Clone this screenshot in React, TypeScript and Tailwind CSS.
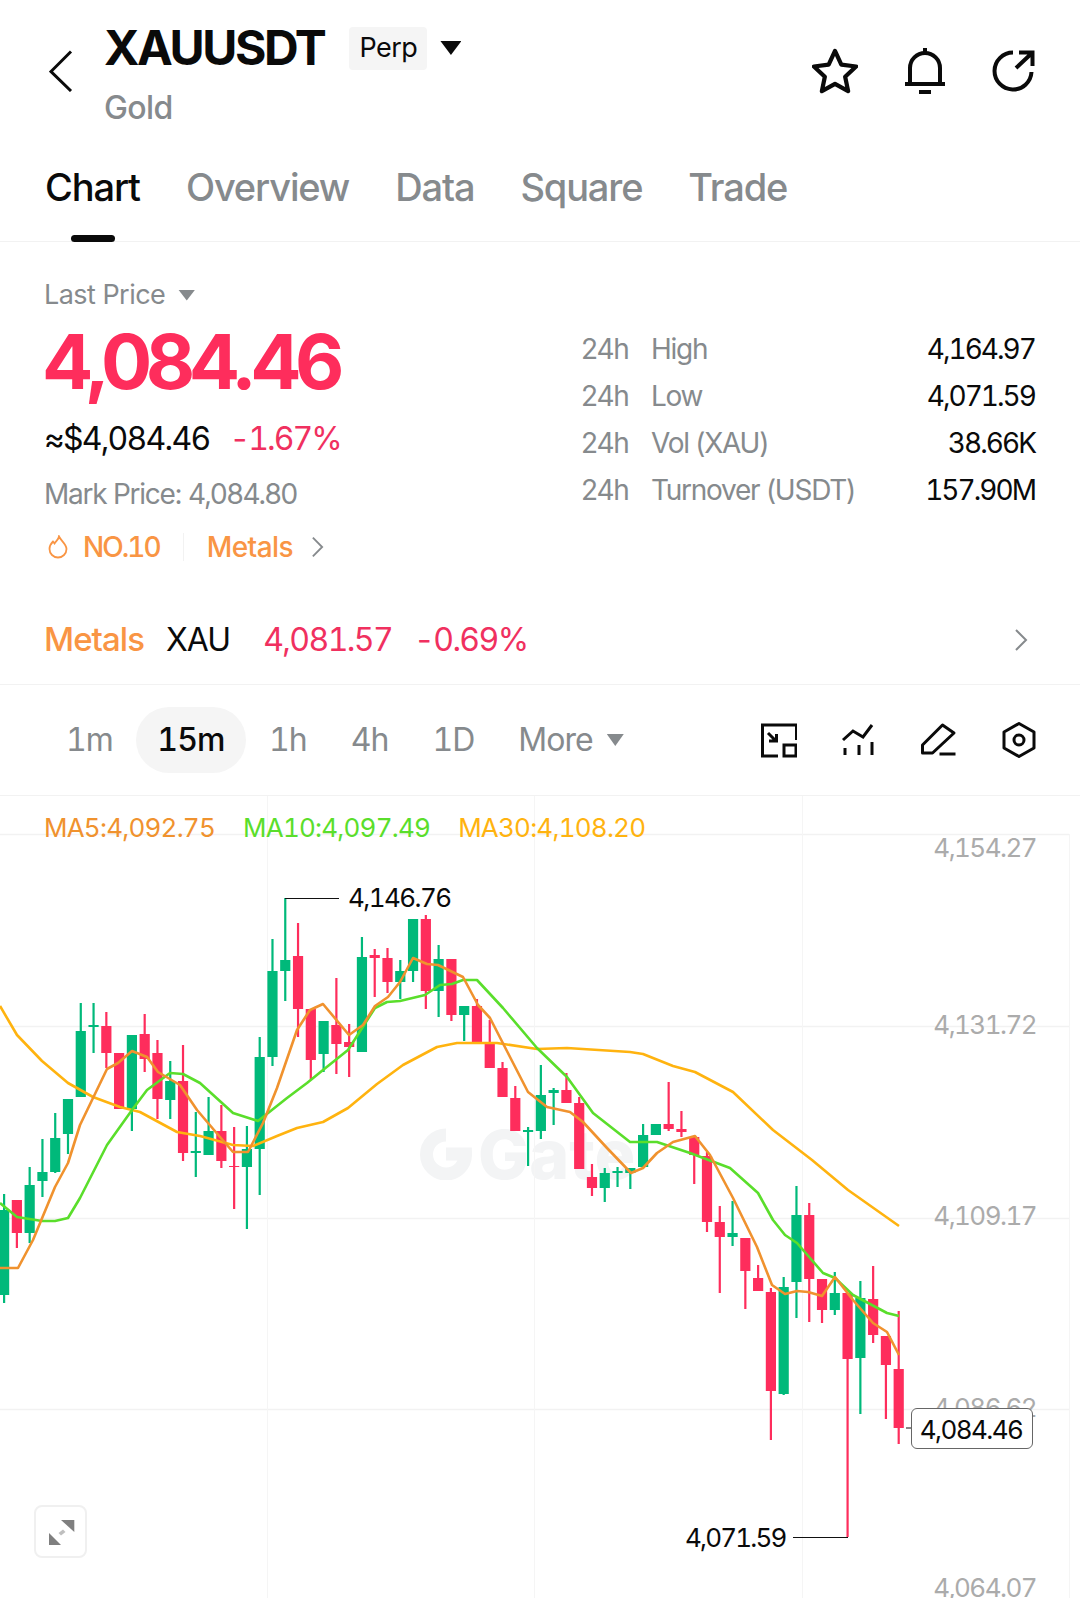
type Candle = [string, number, number, number, number];

// chart data in page pixels: colour, wick top, body top, body bottom, wick bottom
const candles: Candle[] = [
  ['g', 1194, 1210, 1295, 1303], ['r', 1200, 1200, 1233, 1248], ['g', 1167, 1185, 1233, 1243], ['g', 1139, 1172, 1181, 1197],
  ['g', 1113, 1138, 1172, 1173], ['g', 1099, 1099, 1134, 1154], ['g', 1003, 1031, 1097, 1097], ['g', 1003, 1025, 1027, 1053],
  ['r', 1012, 1026, 1053, 1068], ['r', 1053, 1053, 1109, 1109], ['g', 1035, 1035, 1109, 1131], ['r', 1014, 1034, 1059, 1072],
  ['r', 1040, 1053, 1099, 1119], ['g', 1061, 1081, 1100, 1119], ['r', 1045, 1081, 1153, 1161], ['g', 1112, 1151, 1153, 1177],
  ['g', 1097, 1131, 1155, 1155], ['r', 1105, 1131, 1161, 1168], ['r', 1127, 1166, 1167, 1209], ['g', 1126, 1149, 1167, 1229],
  ['g', 1037, 1057, 1149, 1195], ['g', 939, 971, 1057, 1066], ['g', 898, 960, 971, 1001], ['r', 923, 956, 1009, 1037],
  ['r', 1009, 1009, 1060, 1079], ['g', 1021, 1021, 1054, 1072], ['r', 978, 1025, 1044, 1074], ['r', 1024, 1042, 1047, 1077],
  ['g', 937, 957, 1052, 1052], ['r', 949, 955, 958, 997], ['r', 948, 958, 982, 993], ['g', 960, 971, 982, 999],
  ['g', 919, 919, 971, 982], ['r', 915, 919, 991, 1009], ['g', 945, 959, 991, 1017], ['r', 959, 959, 1015, 1021],
  ['g', 1006, 1006, 1015, 1041], ['r', 999, 1006, 1042, 1042], ['r', 1020, 1042, 1068, 1068], ['r', 1062, 1068, 1097, 1097],
  ['r', 1086, 1098, 1131, 1131], ['g', 1127, 1130, 1132, 1166], ['g', 1065, 1095, 1131, 1139], ['g', 1088, 1090, 1093, 1125],
  ['r', 1073, 1090, 1103, 1103], ['r', 1097, 1103, 1169, 1169], ['r', 1164, 1177, 1188, 1196], ['g', 1168, 1173, 1188, 1202],
  ['g', 1167, 1171, 1173, 1187], ['g', 1168, 1168, 1173, 1189], ['g', 1124, 1135, 1167, 1167], ['g', 1124, 1124, 1135, 1135],
  ['r', 1082, 1124, 1129, 1131], ['r', 1111, 1129, 1132, 1137], ['r', 1137, 1137, 1155, 1184], ['r', 1152, 1156, 1222, 1232],
  ['r', 1206, 1222, 1237, 1293], ['g', 1201, 1233, 1237, 1246], ['r', 1238, 1238, 1271, 1309], ['r', 1265, 1278, 1291, 1291],
  ['r', 1288, 1292, 1391, 1440], ['g', 1277, 1287, 1394, 1395], ['g', 1186, 1215, 1282, 1318], ['r', 1203, 1215, 1279, 1322],
  ['r', 1279, 1279, 1310, 1323], ['g', 1272, 1293, 1310, 1315], ['r', 1293, 1293, 1359, 1537], ['g', 1281, 1298, 1358, 1414],
  ['r', 1266, 1299, 1335, 1343], ['r', 1336, 1336, 1365, 1419], ['r', 1311, 1369, 1428, 1444],
];

const ma30 = '0,1006 17,1035 42,1061 68,1083 93,1097 120,1107 140,1112 177,1132 200,1136 233,1145 253,1146 277,1136 297,1128 323,1122 348,1108 377,1084 403,1065 437,1047 457,1043 497,1043 537,1049 567,1048 630,1052 643,1054 673,1066 695,1072 733,1092 773,1130 812,1160 848,1190 899,1226';
const ma10 = '0,1203 17,1217 42,1221 55,1221 68,1218 80,1198 107,1145 132,1110 147,1090 170,1073 183,1074 200,1083 233,1113 258,1121 287,1098 307,1083 323,1070 348,1050 375,1008 387,1002 400,1001 425,995 440,985 452,984 463,980 477,980 503,1008 537,1048 567,1077 593,1113 630,1142 657,1142 690,1153 730,1168 758,1193 773,1220 785,1235 797,1243 823,1273 835,1278 853,1295 887,1313 899,1316';
const ma5 = '0,1268 18,1268 33,1240 55,1187 68,1163 80,1125 107,1069 118,1063 132,1051 147,1057 158,1072 180,1085 197,1110 220,1137 233,1152 248,1152 263,1123 277,1088 297,1030 310,1010 323,1004 349,1035 363,1025 375,1006 388,997 400,982 413,958 427,964 438,965 463,977 478,1005 490,1018 510,1057 528,1092 547,1107 570,1112 583,1122 607,1148 631,1173 643,1168 657,1153 673,1142 695,1136 710,1155 733,1198 757,1247 772,1285 785,1294 797,1291 808,1292 822,1296 835,1277 853,1300 873,1323 887,1332 899,1355';

const stats = [
  ['High', '4,164.97'],
  ['Low', '4,071.59'],
  ['Vol (XAU)', '38.66K'],
  ['Turnover (USDT)', '157.90M'],
];

function ChartDrawing() {
  return (
    <svg viewBox="0 796 1080 802" className="absolute inset-0 w-[1080px] h-[802px]">
      {[834, 1026, 1218, 1409].map((y) => (
        <line key={y} x1="0" y1={y + 0.5} x2="1069" y2={y + 0.5} stroke="#f2f2f2" strokeWidth="1.5" />
      ))}
      {[267, 534, 802].map((x) => (
        <line key={x} x1={x + 0.5} y1="796" x2={x + 0.5} y2="1598" stroke="#f5f5f5" />
      ))}
      <line x1="1069.5" y1="834" x2="1069.5" y2="1598" stroke="#f5f5f5" />
      {candles.map(([color, wickTop, bodyTop, bodyBottom, wickBottom], i) => {
        const x = 4 + i * 12.78;
        const fill = color === 'g' ? '#00b97a' : '#fe2d5c';
        return (
          <g key={i} fill={fill}>
            <rect x={x - 1} y={wickTop} width="2.2" height={wickBottom - wickTop} />
            <rect x={x - 5} y={bodyTop} width="10.2" height={bodyBottom - bodyTop} />
          </g>
        );
      })}
      <polyline points={ma30} fill="none" stroke="#ffb30f" strokeWidth="2.6" strokeLinejoin="round" />
      <polyline points={ma10} fill="none" stroke="#5ade2b" strokeWidth="2.6" strokeLinejoin="round" />
      <polyline points={ma5} fill="none" stroke="#f0922e" strokeWidth="2.6" strokeLinejoin="round" />
      <path d="M285 898.5H339M793 1537.5H848M906 1428H912" stroke="#111" strokeWidth="1" fill="none" />
    </svg>
  );
}

function IconButton({ children }: { children: React.ReactNode }) {
  return (
    <svg viewBox="0 0 36 36" className="w-9 h-9" fill="none" stroke="#0a0a0a" strokeWidth="3">
      {children}
    </svg>
  );
}

const Triangle = ({ className }: { className: string }) => <div className={`[clip-path:polygon(0_0,100%_0,50%_100%)] ${className}`} />;

export default function App() {
  return (
    <main className="w-[1080px] h-[1598px] bg-white overflow-hidden font-['Inter',sans-serif] text-[#0a0a0a]">
      {/* Header */}
      <div className="h-[145px] flex items-start pl-[49px] pr-[44px]">
        <svg viewBox="0 0 24 42" className="w-6 h-[42px] mt-[50px]" fill="none" stroke="#0a0a0a" strokeWidth="3">
          <path d="M22 1.5L2 21.5L22 41" />
        </svg>
        <div className="ml-[31px] pt-[22px]">
          <div className="flex items-center">
            <h1 className="text-[48px] leading-[52px] font-bold tracking-[-0.05em]">XAUUSDT</h1>
            <span className="ml-[25px] w-[78px] h-[43px] bg-[#f5f5f5] rounded-sm flex items-center justify-center text-[27px] tracking-[-0.02em]">Perp</span>
            <Triangle className="ml-[13px] w-[21px] h-[14px] bg-[#0a0a0a]" />
          </div>
          <p className="mt-[16px] text-[32px] leading-9 font-medium tracking-[-0.02em] text-[#868a8d]">Gold</p>
        </div>
        <div className="ml-auto mt-[48px] flex items-center gap-[47px]">
          <svg viewBox="0 0 48 48" className="w-[46px] h-[46px]" fill="none" stroke="#0a0a0a" strokeWidth="4.4" strokeLinejoin="round">
            <path d="M24 3L30.6 17.4L46 19.3L34.6 30L37.7 45L24 37.4L10.3 45L13.4 30L2 19.3L17.4 17.4Z" />
          </svg>
          <svg viewBox="0 0 40 46" className="w-10 h-[46px]" fill="none" stroke="#0a0a0a" strokeWidth="4">
            <path d="M5 36V20a15 15 0 0 1 30 0V36M0 36H40" />
            <path d="M20 0V5M14 44H26" />
          </svg>
          <svg viewBox="0 0 44 44" className="w-11 h-11" fill="none" stroke="#0a0a0a" strokeWidth="4">
            <path d="M21 3.500A18.500 18.500 0 1 0 39.500 23" />
            <path d="M24 19L40 4M27 3.500H40.500V17" />
          </svg>
        </div>
      </div>

      {/* Tabs */}
      <nav className="h-[97px] border-b border-[#f2f2f2] pl-[45px] pt-[19px] flex gap-[46px] text-[38px] leading-[46px] font-medium tracking-[-0.03em] text-[#868a8d]">
        <span className="relative text-[#0a0a0a] h-[78px]">
          Chart
          <span className="absolute left-[26px] bottom-0 w-[44px] h-[7px] rounded-full bg-[#0a0a0a]" />
        </span>
        <span>Overview</span>
        <span>Data</span>
        <span>Square</span>
        <span>Trade</span>
      </nav>

      {/* Price block */}
      <section className="flex justify-between pl-[44px] pr-[45px] pb-[31px]">
        <div className="pt-[35px]">
          <div className="flex items-center text-[27px] leading-9 text-[#868a8d] tracking-[-0.02em]">
            Last Price
            <Triangle className="ml-[13px] w-[17px] h-[11px] bg-[#868a8d]" />
          </div>
          <div className="mt-[8px] -ml-[2px] text-[76px] leading-[80px] font-bold tracking-[-0.085em] text-[#fe2d5c]">4,084.46</div>
          <div className="mt-[18px] flex items-center text-[32px] leading-10 tracking-[-0.055em] tabular-nums">
            <span>≈$4,084.46</span>
            <span className="ml-[20px] text-[#f0305f] tracking-[-0.06em]">-1.67%</span>
          </div>
          <div className="mt-[17px] text-[28px] leading-9 text-[#868a8d] tracking-[-0.045em]">Mark Price: 4,084.80</div>
          <div className="mt-[17px] flex items-center text-[28px] leading-9 font-medium tracking-[-0.02em] text-[#f99544] tabular-nums">
            <svg viewBox="0 0 20 24" className="ml-[4px] w-5 h-6" fill="none" stroke="#f99544" strokeWidth="1.800">
              <path d="M11 1.500C10.500 5 8 6 6.500 8.500L5 6.500C2.500 9 1.500 11.500 1.500 14a8.500 8.500 0 0 0 17 0C18.500 9 13.500 6.500 11 1.500Z" />
            </svg>
            <span className="ml-[15px] tracking-[-0.07em]">NO.10</span>
            <span className="ml-[23px] w-px h-[28px] bg-[#f2f2f2]" />
            <span className="ml-[23px]">Metals</span>
            <svg viewBox="0 0 14 24" className="ml-[18px] w-[13px] h-6" fill="none" stroke="#868a8d" strokeWidth="2">
              <path d="M2 2L12 12L2 22" />
            </svg>
          </div>
        </div>
        <div className="pt-[84px]">
          {stats.map(([label, value]) => (
            <div key={label} className="w-[454px] flex text-[28px] leading-[47px] tracking-[-0.045em]">
              <span className="w-[70px] text-[#868a8d]">24h</span>
              <span className="text-[#868a8d]">{label}</span>
              <span className="ml-auto tabular-nums tracking-[-0.07em]">{value}</span>
            </div>
          ))}
        </div>
      </section>

      {/* Sector row */}
      <div className="h-[89px] border-b border-[#f2f2f2] pl-[44px] pr-[52px] flex items-center text-[32px] tracking-[-0.03em] tabular-nums">
        <span className="text-[33px] font-medium text-[#f99544]">Metals</span>
        <span className="ml-[22px]">XAU</span>
        <span className="ml-[33px] text-[#f0305f] tracking-[-0.05em]">4,081.57</span>
        <span className="ml-[22px] text-[#f0305f] tracking-[-0.05em]">-0.69%</span>
        <svg viewBox="0 0 14 24" className="ml-auto w-[14px] h-6" fill="none" stroke="#868a8d" strokeWidth="2">
          <path d="M2 2L12 12L2 22" />
        </svg>
      </div>

      {/* Interval toolbar */}
      <div className="h-[111px] border-b border-[#f2f2f2] pl-[45px] pr-[43px] flex items-center gap-[2px] text-[32px] tracking-[-0.03em] text-[#868a8d] tabular-nums">
        <span className="px-[21px]">1m</span>
        <span className="h-[66px] w-[110px] rounded-full bg-[#f5f5f5] flex items-center justify-center font-medium text-[#0a0a0a]">15m</span>
        <span className="px-[21px]">1h</span>
        <span className="px-[21px]">4h</span>
        <span className="px-[21px]">1D</span>
        <span className="pl-[21px] flex items-center">
          More
          <Triangle className="ml-[14px] w-[17px] h-[12px] bg-[#868a8d]" />
        </span>
        <div className="ml-auto flex gap-[44px]">
          <IconButton>
            <path d="M17 34H1.500V3H35.500V18" />
            <rect x="23" y="23" width="12" height="11" />
            <path d="M7 11L15 19M8 19H15.500V12" />
          </IconButton>
          <IconButton>
            <path d="M2 18L12 9L22 15L31 3" />
            <path d="M4 26V33M18 23V33M31 20V33" />
          </IconButton>
          <IconButton>
            <path d="M1.500 31V23L21.500 3L33 11L11.500 31Z" strokeLinejoin="round" />
            <path d="M18.500 32H34.500" />
          </IconButton>
          <IconButton>
            <path d="M18 1.500L33 10V26L18 34.500L3 26V10Z" strokeLinejoin="round" />
            <circle cx="18" cy="18" r="5" />
          </IconButton>
        </div>
      </div>

      {/* Chart */}
      <div className="relative h-[802px] overflow-hidden">
        {/* watermark */}
        <div className="absolute left-[420px] top-[332px] flex items-center text-[#f3f4f5]">
          <svg viewBox="0 0 52 52" className="w-[52px] h-[52px]" fill="none" stroke="#f3f4f5" strokeWidth="13">
            <path d="M26 7A19.500 19.500 0 1 0 45.500 26H26" />
          </svg>
          <span className="ml-[6px] text-[68px] leading-[52px] font-extrabold">Gate</span>
        </div>

        <ChartDrawing />

        <div className="absolute left-[44px] top-[16px] flex text-[26px] leading-8 tracking-[-0.03em] tabular-nums">
          <span className="text-[#f0922e]">MA5:4,092.75</span>
          <span className="ml-[28px] text-[#5ade2b]">MA10:4,097.49</span>
          <span className="ml-[28px] text-[#ffb30f]">MA30:4,108.20</span>
        </div>

        <span className="absolute right-[44px] top-[36px] text-[26px] leading-8 tracking-[-0.06em] tabular-nums text-[#ababab]">4,154.27</span>
        <span className="absolute right-[44px] top-[213px] text-[26px] leading-8 tracking-[-0.06em] tabular-nums text-[#ababab]">4,131.72</span>
        <span className="absolute right-[44px] top-[404px] text-[26px] leading-8 tracking-[-0.06em] tabular-nums text-[#ababab]">4,109.17</span>
        <span className="absolute right-[44px] top-[596px] text-[26px] leading-8 tracking-[-0.06em] tabular-nums text-[#ababab]">4,086.62</span>
        <span className="absolute right-[44px] top-[776px] text-[26px] leading-8 tracking-[-0.06em] tabular-nums text-[#ababab]">4,064.07</span>

        <span className="absolute left-[348px] top-[86px] text-[26px] leading-8 tracking-[-0.06em] tabular-nums">4,146.76</span>
        <span className="absolute left-[685px] top-[726px] text-[26px] leading-8 tracking-[-0.07em] tabular-nums">4,071.59</span>

        <span className="absolute left-[911px] top-[612px] w-[122px] h-[41px] rounded-md border border-[#666] bg-white flex items-center justify-center pt-[1px] pr-[2px] text-[26px] tracking-[-0.06em] tabular-nums">4,084.46</span>

        <div className="absolute left-[34px] top-[709px] w-[53px] h-[53px] rounded-lg border-2 border-[#f0f0f0] bg-white flex items-center justify-center">
          <svg viewBox="0 0 28 28" className="w-7 h-7" fill="#7f7f7f">
            <path d="M14 2H27.300V14Z" />
            <path d="M2 15V27H14Z" />
            <path d="M16 11.500L18.500 14L14 17.500L11.500 15Z" opacity="0.5" />
          </svg>
        </div>
      </div>
    </main>
  );
}
